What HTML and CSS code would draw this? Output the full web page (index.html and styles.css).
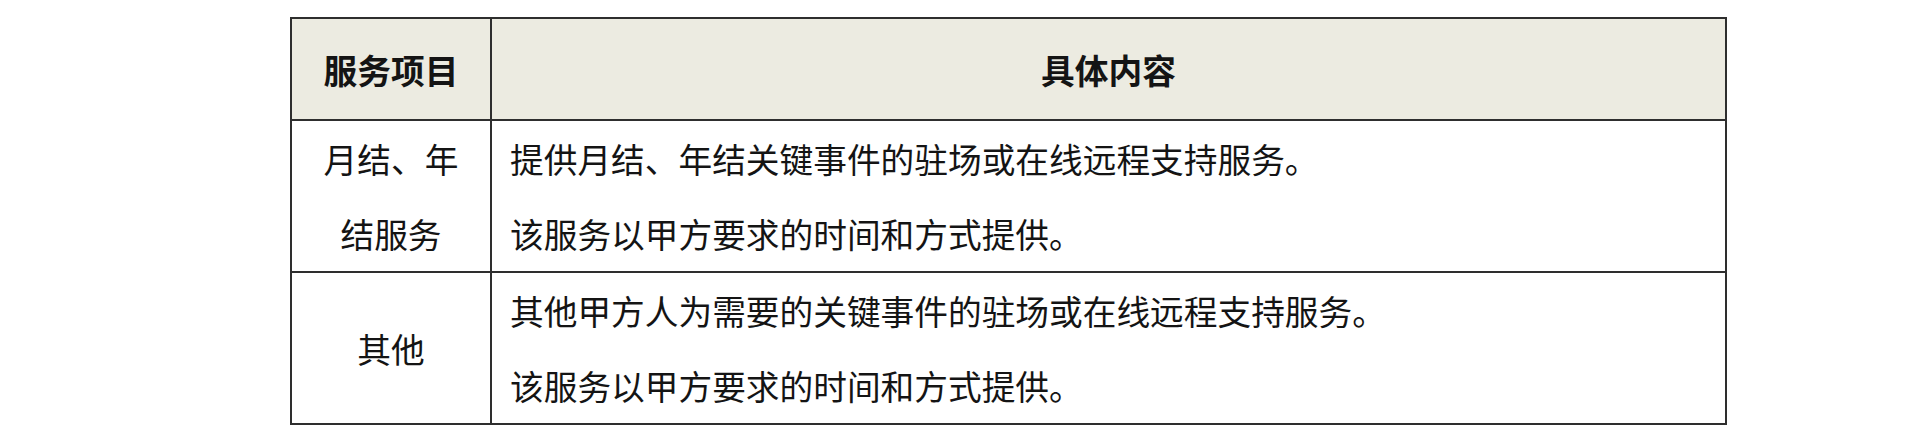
FILE: index.html
```html
<!DOCTYPE html>
<html lang="zh-CN">
<head>
<meta charset="utf-8">
<title>服务项目</title>
<link rel="stylesheet" href="styles.css">
</head>
<body>
<table class="svc">
  <colgroup>
    <col class="c1">
    <col class="c2">
  </colgroup>
  <thead>
    <tr>
      <th>服务项目</th>
      <th>具体内容</th>
    </tr>
  </thead>
  <tbody>
    <tr>
      <td class="name">月结、年结服务</td>
      <td class="desc">
        <p>提供月结、年结关键事件的驻场或在线远程支持服务。</p>
        <p>该服务以甲方要求的时间和方式提供。</p>
      </td>
    </tr>
    <tr>
      <td class="name">其他</td>
      <td class="desc">
        <p>其他甲方人为需要的关键事件的驻场或在线远程支持服务。</p>
        <p>该服务以甲方要求的时间和方式提供。</p>
      </td>
    </tr>
  </tbody>
</table>
</body>
</html>
```

FILE: styles.css
```css
html, body {
  margin: 0;
  padding: 0;
  background: #ffffff;
}

body {
  font-family: "Noto Sans CJK SC", "Noto Sans", sans-serif;
  color: #141414;
  padding: 17px 0 0 290px;
}

.svc {
  border-collapse: collapse;
  width: 1437px;
  table-layout: fixed;
  border: 2px solid #2e2e2e;
}

.svc .c1 { width: 200px; }

.svc th,
.svc td {
  border: 2px solid #2e2e2e;
  font-size: 33.7px;
  line-height: 75px;
  vertical-align: middle;
}

.svc th {
  background: #ecebe1;
  font-weight: 700;
  height: 100px;
  padding: 0;
  text-align: center;
}

.svc td {
  padding: 0 18px;
  font-weight: 400;
}

.svc td.name {
  text-align: center;
  padding-left: 18px;
  padding-right: 18px;
}

.svc td.desc p {
  margin: 0;
}
```
